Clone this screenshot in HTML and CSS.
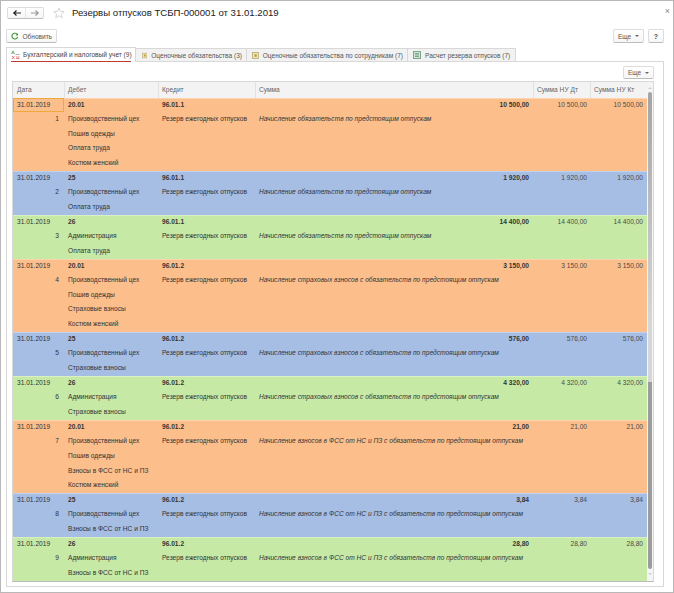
FILE: index.html
```html
<!DOCTYPE html>
<html lang="ru">
<head>
<meta charset="utf-8">
<title>Резервы отпусков</title>
<link rel="stylesheet" href="styles.css">
</head>
<body>
<div class="window">
  <button class="close" aria-label="Закрыть">×</button>
  <header class="titlebar">
    <div class="navgroup">
      <span class="nav"><svg width="10" height="8" viewBox="0 0 10 8"><path d="M9 4H2M4.500 1.500 1.800 4l2.700 2.500" fill="none" stroke="#222" stroke-width="1.200"/></svg></span>
      <span class="nav"><svg width="10" height="8" viewBox="0 0 10 8"><path d="M1 4h7M5.500 1.500 8.200 4 5.500 6.500" fill="none" stroke="#999" stroke-width="1.200"/></svg></span>
    </div>
    <svg class="star" width="12" height="12" viewBox="0 0 13 13"><path d="M6.500 1l1.600 3.700 4 .4-3 2.600.9 3.900-3.500-2.100L3 11.600l.9-3.900-3-2.600 4-.4z" fill="none" stroke="#c8c8c8" stroke-width=".8"/></svg>
    <h1>Резервы отпусков ТСБП-000001 от 31.01.2019</h1>
  </header>
  <div class="toolbar">
    <button class="btn refresh"><svg width="8" height="8" viewBox="0 0 9 9"><path d="M7.500 3A3.400 3.400 0 1 0 7.800 5.500" fill="none" stroke="#3f9a3f" stroke-width="1.400"/><path d="M8.300.8v3H5.400z" fill="#3f9a3f"/></svg>Обновить</button>
    <span class="spacer"></span>
    <button class="btn more">Еще <i class="caret"></i></button>
    <button class="btn help">?</button>
  </div>
  <nav class="tabs">
    <div class="tab active"><svg width="9" height="10" viewBox="0 0 9 10"><path d="M.5 4 2 .8 3.500 4M1 3h2" fill="none" stroke="#4a9a4a" stroke-width=".7"/><path d="M4.500 4.500h4" stroke="#777" stroke-width=".6"/><path d="M1 6l2.500 3M3.500 6 1 9M5 7h3.500M5 8.500h3.500" stroke="#d9534f" stroke-width=".7" fill="none"/></svg>Бухгалтерский и налоговый учет (9)</div>
    <div class="tab"><svg width="7" height="7" viewBox="0 0 8 8"><rect x=".5" y=".5" width="7" height="7" fill="#f2e7a8" stroke="#b5ab7a"/><rect x="3" y="2.500" width="2.500" height="3" fill="#b89a3a"/></svg>Оценочные обязательства (3)</div>
    <div class="tab"><svg width="7" height="7" viewBox="0 0 8 8"><rect x=".5" y=".5" width="7" height="7" fill="#f2e7a8" stroke="#b5ab7a"/><rect x="3" y="2.500" width="2.500" height="3" fill="#b89a3a"/></svg>Оценочные обязательства по сотрудникам (7)</div>
    <div class="tab"><svg width="8" height="8" viewBox="0 0 8 8"><rect x=".5" y=".5" width="7" height="7" fill="#cfe6d6" stroke="#7fa58c"/><path d="M2 2.500h4M2 4h4M2 5.500h4" stroke="#5d8a70" stroke-width=".7"/></svg>Расчет резерва отпусков (7)</div>
  </nav>
  <section class="panel">
    <div class="panelbar"><button class="btn more">Еще <i class="caret"></i></button></div>
    <div class="grid">
      <div class="table">
        <div class="row head">
          <div class="cell">Дата</div><div class="cell">Дебет</div><div class="cell">Кредит</div><div class="cell">Сумма</div><div class="cell">Сумма НУ Дт</div><div class="cell">Сумма НУ Кт</div>
        </div>
        <div class="row orange">
          <div class="cell date"><span class="current">31.01.2019</span><span class="num">1</span></div>
          <div class="cell"><b>20.01</b><span>Производственный цех</span><span>Пошив одежды</span><span>Оплата труда</span><span>Костюм женский</span></div>
          <div class="cell"><b>96.01.1</b><span>Резерв ежегодных отпусков</span></div>
          <div class="cell sum"><b>10 500,00</b><em>Начисление обязательств по предстоящим отпускам</em></div>
          <div class="cell amt">10 500,00</div><div class="cell amt">10 500,00</div>
        </div>
        <div class="row blue">
          <div class="cell date"><span>31.01.2019</span><span class="num">2</span></div>
          <div class="cell"><b>25</b><span>Производственный цех</span><span>Оплата труда</span></div>
          <div class="cell"><b>96.01.1</b><span>Резерв ежегодных отпусков</span></div>
          <div class="cell sum"><b>1 920,00</b><em>Начисление обязательств по предстоящим отпускам</em></div>
          <div class="cell amt">1 920,00</div><div class="cell amt">1 920,00</div>
        </div>
        <div class="row green">
          <div class="cell date"><span>31.01.2019</span><span class="num">3</span></div>
          <div class="cell"><b>26</b><span>Администрация</span><span>Оплата труда</span></div>
          <div class="cell"><b>96.01.1</b><span>Резерв ежегодных отпусков</span></div>
          <div class="cell sum"><b>14 400,00</b><em>Начисление обязательств по предстоящим отпускам</em></div>
          <div class="cell amt">14 400,00</div><div class="cell amt">14 400,00</div>
        </div>
        <div class="row orange">
          <div class="cell date"><span>31.01.2019</span><span class="num">4</span></div>
          <div class="cell"><b>20.01</b><span>Производственный цех</span><span>Пошив одежды</span><span>Страховые взносы</span><span>Костюм женский</span></div>
          <div class="cell"><b>96.01.2</b><span>Резерв ежегодных отпусков</span></div>
          <div class="cell sum"><b>3 150,00</b><em>Начисление страховых взносов с обязательств по предстоящим отпускам</em></div>
          <div class="cell amt">3 150,00</div><div class="cell amt">3 150,00</div>
        </div>
        <div class="row blue">
          <div class="cell date"><span>31.01.2019</span><span class="num">5</span></div>
          <div class="cell"><b>25</b><span>Производственный цех</span><span>Страховые взносы</span></div>
          <div class="cell"><b>96.01.2</b><span>Резерв ежегодных отпусков</span></div>
          <div class="cell sum"><b>576,00</b><em>Начисление страховых взносов с обязательств по предстоящим отпускам</em></div>
          <div class="cell amt">576,00</div><div class="cell amt">576,00</div>
        </div>
        <div class="row green">
          <div class="cell date"><span>31.01.2019</span><span class="num">6</span></div>
          <div class="cell"><b>26</b><span>Администрация</span><span>Страховые взносы</span></div>
          <div class="cell"><b>96.01.2</b><span>Резерв ежегодных отпусков</span></div>
          <div class="cell sum"><b>4 320,00</b><em>Начисление страховых взносов с обязательств по предстоящим отпускам</em></div>
          <div class="cell amt">4 320,00</div><div class="cell amt">4 320,00</div>
        </div>
        <div class="row orange">
          <div class="cell date"><span>31.01.2019</span><span class="num">7</span></div>
          <div class="cell"><b>20.01</b><span>Производственный цех</span><span>Пошив одежды</span><span>Взносы в ФСС от НС и ПЗ</span><span>Костюм женский</span></div>
          <div class="cell"><b>96.01.2</b><span>Резерв ежегодных отпусков</span></div>
          <div class="cell sum"><b>21,00</b><em>Начисление взносов в ФСС от НС и ПЗ с обязательств по предстоящим отпускам</em></div>
          <div class="cell amt">21,00</div><div class="cell amt">21,00</div>
        </div>
        <div class="row blue">
          <div class="cell date"><span>31.01.2019</span><span class="num">8</span></div>
          <div class="cell"><b>25</b><span>Производственный цех</span><span>Взносы в ФСС от НС и ПЗ</span></div>
          <div class="cell"><b>96.01.2</b><span>Резерв ежегодных отпусков</span></div>
          <div class="cell sum"><b>3,84</b><em>Начисление взносов в ФСС от НС и ПЗ с обязательств по предстоящим отпускам</em></div>
          <div class="cell amt">3,84</div><div class="cell amt">3,84</div>
        </div>
        <div class="row green">
          <div class="cell date"><span>31.01.2019</span><span class="num">9</span></div>
          <div class="cell"><b>26</b><span>Администрация</span><span>Взносы в ФСС от НС и ПЗ</span></div>
          <div class="cell"><b>96.01.2</b><span>Резерв ежегодных отпусков</span></div>
          <div class="cell sum"><b>28,80</b><em>Начисление взносов в ФСС от НС и ПЗ с обязательств по предстоящим отпускам</em></div>
          <div class="cell amt">28,80</div><div class="cell amt">28,80</div>
        </div>
      </div>
      <div class="scrollbar"><i class="up"></i><i class="thumb-light"></i><i class="thumb"></i><i class="down"></i></div>
    </div>
  </section>
</div>
</body>
</html>
```

FILE: styles.css
```css
* { box-sizing: border-box; }
html, body { margin: 0; height: 100%; background: #fff; }
body { font-family: "Liberation Sans", Arial, sans-serif; color: #333; overflow: hidden; }
.window {
  position: relative;
  width: 674px; height: 593px;
  border: 1px solid #b8b8b8;
  padding: 6px 9px 0 5px;
  display: flex; flex-direction: column;
}
.close { position: absolute; top: 5px; right: 3px; border: 0; background: none; padding: 0; font: 9px/10px "Liberation Sans", sans-serif; color: #888; }
.titlebar { height: 12px; display: flex; align-items: center; padding-left: 1px; }
.navgroup { display: flex; width: 37px; height: 12px; border: 1px solid #dcdcdc; border-bottom-color: #c0c0c0; border-radius: 2px; background: linear-gradient(#fff, #f6f6f6); flex: none; }
.nav { flex: 1; display: flex; align-items: center; justify-content: center; }
.nav + .nav { border-left: 1px solid #e8e8e8; }
.star { margin-left: 9px; flex: none; }
h1 { margin: 0 0 0 7px; font-size: 9.62px; line-height: 12px; font-weight: 400; color: #222; white-space: nowrap; }
.toolbar { height: 14px; margin-top: 10px; display: flex; align-items: stretch; gap: 4px; }
.spacer { flex: 1; }
.btn {
  font: 6.5px/11px "Liberation Sans", sans-serif; color: #555;
  border: 1px solid #dcdcdc; border-bottom-color: #bcbcbc; border-radius: 2px;
  background: linear-gradient(#fff, #f6f6f6); padding: 0; display: inline-flex; align-items: center; white-space: nowrap;
}
.refresh { width: 51px; gap: 4px; padding: 0 4px; }
.more { width: 31px; justify-content: center; gap: 2px; }
.help { width: 16px; justify-content: center; font-weight: 700; font-size: 7px; }
.caret { width: 0; height: 0; border: 2px solid transparent; border-top: 2.5px solid #666; border-bottom: 0; margin-left: 2px; }
.tabs { display: flex; height: 13px; margin-top: 5px; position: relative; z-index: 1; }
.tab {
  display: flex; align-items: center; gap: 3px; height: 13px; padding: 0 4px 0 5px;
  font-size: 6.56px; color: #555; white-space: nowrap;
  background: #f2f2f2; border: 1px solid #d8d8d8; border-bottom: 0; border-left: 0; flex: none;
}
.tab.active {
  background: #fff; width: 130px; height: 15px; margin-top: -1px; padding: 0 0 1px 4px; position: relative; gap: 3px;
  border-left: 1px solid #d8d8d8; color: #444;
}
.tab.active::after { content: ""; position: absolute; left: 4px; right: 4px; bottom: 0; height: 1px; background: #c0392b; }
.tabs .tab:nth-child(2) { width: 111px; gap: 4px; padding-left: 6px; }
.tabs .tab:nth-child(3) { width: 161px; gap: 4px; }
.tabs .tab:nth-child(4) { width: 108px; gap: 4px; }
.panel { height: 526px; border: 1px solid #d8d8d8; padding: 4px 9px 0 5px; display: flex; flex-direction: column; }
.panelbar { height: 13px; display: flex; justify-content: flex-end; margin-bottom: 2px; }
.grid { display: flex; height: 501px; border-top: 1px solid #d8d8d8; border-left: 1px solid #d8d8d8; border-right: 1px solid #d8d8d8; border-bottom: 1px solid #bbb; }
.table { flex: none; width: 634px; }
.row { display: grid; grid-template-columns: 51px 94px 97px 278px 57px 57px; font-size: 6.62px; line-height: 14.64px; box-shadow: inset 0 1px #ffffff50; }
.cell { padding: 0 4px; display: flex; flex-direction: column; white-space: nowrap; min-width: 0; }
.cell b, .cell span, .cell em { display: block; }
.head { background: #f3f3f3; height: 15.5px; color: #666; box-shadow: none; }
.head .cell { border-left: 1px solid #e2e2e2; line-height: 15px; padding-left: 3px; }
.head .cell:first-child { border-left: 0; padding-left: 4px; }
.orange { background: #fcbf8c; }
.blue { background: #a6bde4; }
.green { background: #c6eaa6; }
.date { padding: 0; }
.date span { padding: 0 4px; }
.date .num { text-align: right; padding-right: 5px; }
.current { outline: 1px solid #eba93e; outline-offset: -1px; }
.sum b { text-align: right; }
.amt { text-align: right; color: #4a4a4a; padding-right: 3px; }
.row .amt:last-child { padding-right: 4px; }
.scrollbar { flex: 1; display: flex; flex-direction: column; align-items: center; background: #f5f5f5; }
.thumb-light { display: block; width: 4px; height: 290px; margin-top: 3px; border-radius: 2px 2px 0 0; background: linear-gradient(#a4a4a4, #d6d6d6 80%); }
.thumb { display: block; width: 4px; height: 187px; border-radius: 0 0 2px 2px; background: #9c9c9c; }
.up, .down { display: block; width: 0; height: 0; border: 2px solid transparent; flex: none; }
.up { border-bottom: 2.5px solid #ccc; border-top: 0; margin-top: 5px; }
.down { border-top: 2.5px solid #ccc; border-bottom: 0; margin-top: 4px; }
```
